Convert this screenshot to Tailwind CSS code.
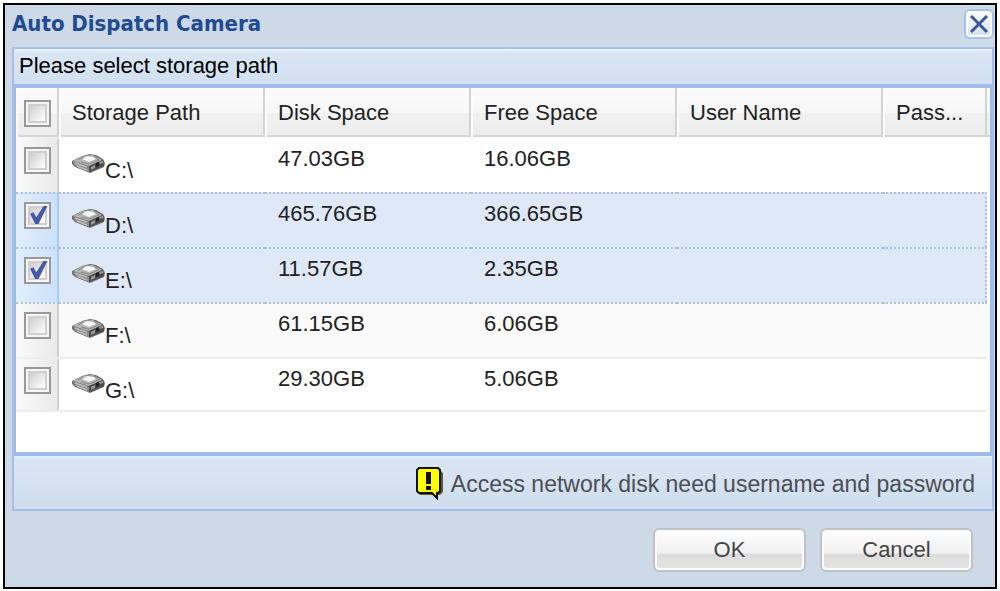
<!DOCTYPE html>
<html lang="en">
<head>
  <meta charset="UTF-8" />
  <meta name="viewport" content="width=device-width, initial-scale=1.0"/>
  <title>Auto Dispatch Camera</title>
  <script src="https://cdn.jsdelivr.net/npm/@tailwindcss/browser@4"></script>
</head>
<body class="bg-white p-[3px] font-['Liberation_Sans',Arial,sans-serif] text-[22px] leading-6 text-[#222]">

  <!-- Shared icons -->
  <svg class="hidden">
    <symbol id="disk" viewBox="0 0 33 19">
      <path d="M0 7 L10 2 L18 0 L24 1 L31 5 L33 9 L32 13 L18 19 L3 13 L0 10 Z" fill="#6f6f6f"/>
      <path d="M1 7 L11 2 L21 1 L30 6 L17 12 Z" fill="#b5b5b5"/>
      <path d="M10 5 L15 2 L21 3 L24 5 L17 8 Z" fill="#f6f6f6"/>
      <path d="M6 6 L12 3 M22 2 L27 6 L17 10 L9 8" fill="none" stroke="#888"/>
      <path d="M1 8 L17 13 L17 18 L3 12 Z" fill="#8c8c8c"/>
      <path d="M3 9 L15 13 M5 12 L15 16" stroke="#bcbcbc" stroke-width="1.5"/>
      <path d="M17 12 L31 6 L32 12 L17 18 Z" fill="#4a4a4a"/>
      <path d="M19 13 L23 11 L23 14 L19 16 Z M27 8 L31 7 L31 9 L28 10 Z" fill="#9a9a9a"/>
      <path d="M24 9 L27 8 L27 12 L24 13 Z" fill="#222"/>
    </symbol>
    <symbol id="tick" viewBox="0 0 17 17">
      <path d="M1 7 L4 5.500 L6.500 10 L13 0 L16.500 0 L8.500 16 L5.500 16 Z" fill="#4859a5"/>
    </symbol>
  </svg>

  <main class="border-2 border-black bg-[#cdd9e7]">

    <!-- Title bar -->
    <header class="flex h-[42px] items-center justify-between pr-px pl-[7px]">
      <h1 class="pb-1 font-['DejaVu_Sans_Condensed','DejaVu_Sans',sans-serif] text-[22px] font-bold text-[#204a92]">Auto Dispatch Camera</h1>
      <button type="button" aria-label="Close" class="mb-1 grid size-[30px] place-items-center rounded-md border-2 border-[#a5c3ee] bg-linear-to-b from-white to-[#cfe0f8] shadow-[inset_0_0_0_2px_white]">
        <svg class="size-[18px]" viewBox="0 0 18 18"><path d="M1 1 L17 17 M17 1 L1 17" stroke="#3f5696" stroke-width="3"/></svg>
      </button>
    </header>

    <section class="mr-px ml-[7px] border-2 border-[#a3c0ea]">
      <h2 class="h-[35px] border-t-2 border-[#eaf2fb] bg-linear-to-b from-[#dae6f3] to-[#d1dff0] pt-[3px] pl-[5px] text-black">Please select storage path</h2>

      <!-- Disk list -->
      <div class="border-x-2 border-y-4 border-[#9dbce8]">
        <div class="min-h-[364px] bg-white bg-[linear-gradient(#fcfcfc,#f7f7f7_50%,#f1f1f1_52%,#ededed_95%,#d6d6d6_96%)] bg-[length:100%_49px] bg-no-repeat pr-[3px]">
          <table class="w-full table-fixed border-separate border-spacing-0 text-left">
            <colgroup>
              <col class="w-[43px]" />
              <col class="w-[206px]" />
              <col class="w-[206px]" />
              <col class="w-[206px]" />
              <col class="w-[206px]" />
              <col />
            </colgroup>
            <thead>
              <tr class="h-[49px] [&>th]:border-r-2 [&>th]:border-[#d4d4d4] [&>th]:pt-px [&>th]:font-normal [&>th]:shadow-[inset_2px_0_0_#fcfcfc]">
                <th class="pl-2">
                  <input type="checkbox" aria-label="Select all" class="block size-[27px] appearance-none border-2 border-[#999] bg-[#f6f6f6] p-[2px] before:block before:size-[19px] before:border-2 before:border-[#cfcfcf] before:bg-linear-to-br before:from-[#cfcfcf] before:to-white before:content-['']" />
                </th>
                <th class="pl-[13px]">Storage Path</th>
                <th class="pl-[13px]">Disk Space</th>
                <th class="pl-[13px]">Free Space</th>
                <th class="pl-[13px]">User Name</th>
                <th class="pl-[13px]">Pass...</th>
              </tr>
            </thead>
            <tbody id="disk-list"></tbody>
          </table>
        </div>
      </div>

      <div class="flex h-[53px] items-center justify-end gap-2 border-t-2 border-[#e3eefa] bg-linear-to-b from-[#dae6f3] to-[#cfddee] pr-[17px] text-[23px] text-[#4c4f54]">
        <svg class="h-[33px] w-7" viewBox="0 0 28 33">
          <path d="M5 3 H25 L28 6 V25 L25 28 H23 V33 L18 28 H5 L3 25 Z" fill="#5d5d20"/>
          <path d="M4 1 H23 L25 3 V24 L23 26 H22 V31 L17 26 H4 L2 24 V3 Z" fill="#ffff00" stroke="#111" stroke-width="2"/>
          <path d="M11 5 H16 V17 H11 Z M11 19 H16 V23 H11 Z" fill="#111"/>
        </svg>
        <p>Access network disk need username and password</p>
      </div>
    </section>

    <!-- Buttons -->
    <footer class="flex justify-end gap-[14px] pt-[17px] pr-[22px] pb-[15px] text-[#444]">
      <button type="button" class="h-11 w-[153px] rounded-md border-2 border-[#bfc3c8] bg-[linear-gradient(#fff,#f0f0f0_58%,#dcdcdc_60%,#e4e4e4)] shadow-[inset_0_0_0_2px_#fafafa]">OK</button>
      <button type="button" class="h-11 w-[153px] rounded-md border-2 border-[#bfc3c8] bg-[linear-gradient(#fff,#f0f0f0_58%,#dcdcdc_60%,#e4e4e4)] shadow-[inset_0_0_0_2px_#fafafa]">Cancel</button>
    </footer>
  </main>

  <script>
    const disks = [
      { path: "C:\\", total: "47.03GB", free: "16.06GB", row: "[&>td]:border-t-transparent" },
      { path: "D:\\", total: "465.76GB", free: "366.65GB", checked: true, row: "bg-[#dfe8f6] [&>td]:border-dotted [&>td]:border-t-[#b4bfd0]" },
      { path: "E:\\", total: "11.57GB", free: "2.35GB", checked: true, row: "bg-[#dfe8f6] [&>td]:border-dotted [&>td]:border-t-[#a9c1e8]" },
      { path: "F:\\", total: "61.15GB", free: "6.06GB", row: "bg-[#fafafa] [&>td]:border-dotted [&>td]:border-t-[#a9c1e8]" },
      { path: "G:\\", total: "29.30GB", free: "5.06GB", row: "[&>td]:border-t-[#ededed] [&>td]:border-b-2 [&>td]:border-b-[#ededed]" },
    ];

    document.getElementById("disk-list").innerHTML = disks.map(d => `
      <tr class="h-[55px] [&>td]:border-t-2 [&>td]:pt-2 [&>td]:align-top ${d.row}">
        <td class="bg-linear-to-r pl-2 ${d.checked ? "from-[#e3eefb] to-[#cbe0fb] shadow-[inset_-2px_0_0_#a9cdf7]" : "from-[#fafafa] to-[#e9e9e9] shadow-[inset_-2px_0_0_#d0d0d0]"}">
          <label class="relative block size-[27px]">
            <input type="checkbox" aria-label="${d.path}" ${d.checked ? "checked" : ""} class="peer block size-[27px] appearance-none border-2 border-[#999] bg-[#f6f6f6] p-[2px] before:block before:size-[19px] before:border-2 before:border-[#cfcfcf] before:bg-linear-to-br before:from-[#cfcfcf] before:to-white before:content-['']" />
            <svg class="absolute top-1 left-[5px] hidden size-[19px] peer-checked:block"><use href="#tick"/></svg>
          </label>
        </td>
        <td>
          <div class="flex items-start pl-[13px]">
            <svg class="mt-[7px] h-[19px] w-[33px]"><use href="#disk"/></svg>
            <span class="mt-3">${d.path}</span>
          </div>
        </td>
        <td class="pl-[13px]">${d.total}</td>
        <td class="pl-[13px]">${d.free}</td>
        <td></td>
        <td class="${d.checked ? "border-r-2 border-r-[#a9c1e8]" : ""}"></td>
      </tr>`).join("");
  </script>
</body>
</html>
